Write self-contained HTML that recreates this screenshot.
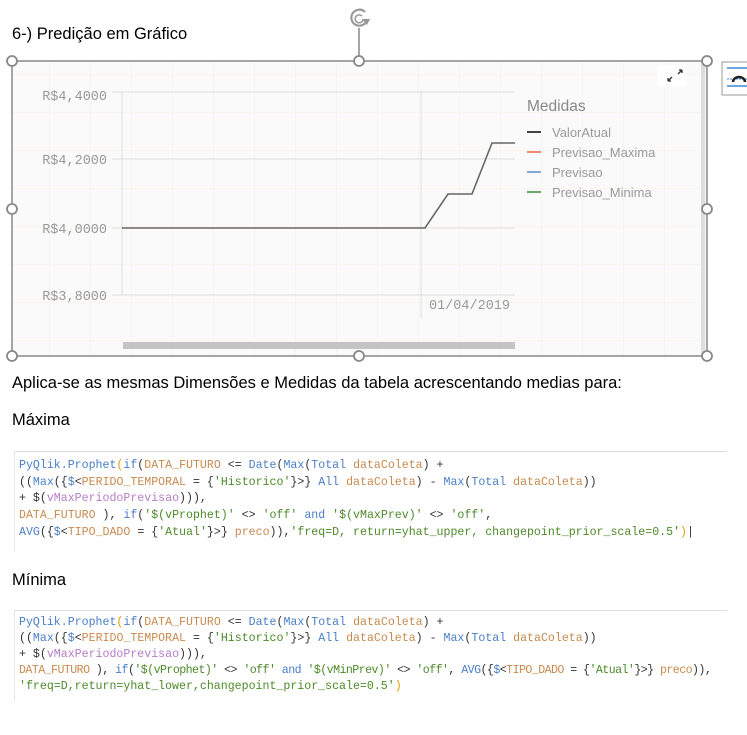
<!DOCTYPE html>
<html><head><meta charset="utf-8"><style>
body{margin:0;background:#fff;width:747px;height:735px;overflow:hidden;position:relative;font-family:"Liberation Sans",sans-serif}
.t{position:absolute;left:12px;font-size:16.5px;color:#000;white-space:nowrap}
.code{position:absolute;left:14px;right:20px;border-top:1px solid #ddd;border-left:1px solid #e6e6e6;font-family:"Liberation Mono",monospace;font-size:11.6px;white-space:pre;color:#333}
.code div{position:absolute;left:4px}
.b{color:#4a7fc8}.o{color:#c98a4f}.g{color:#4d8a2a}.p{color:#b77cc7}.y{color:#e0a000}
</style></head><body>
<div class="t" style="top:25px">6-) Predição em Gráfico</div>
<svg style="position:absolute;left:0;top:0" width="747" height="365">
<defs><pattern id="gr" width="41" height="38" patternUnits="userSpaceOnUse" x="8" y="-2"><path d="M0 0V38M0 0H41" stroke="#fbeee2" stroke-width="1" fill="none"/></pattern></defs>
<rect x="12" y="61" width="695" height="295" fill="#fafafa"/>
<rect x="12" y="61" width="695" height="295" fill="url(#gr)"/>
<rect x="701" y="61" width="4" height="295" fill="#ddd"/>
<rect x="657" y="65" width="30" height="22" fill="#fff"/>
<path d="M668 81l4-4M668 81v-3M668 81h3M682 70l-4 4M682 70v3M682 70h-3" stroke="#333" stroke-width="1.3" fill="none"/>
<g stroke="#ddd" stroke-width="1">
<line x1="112" y1="92" x2="515" y2="92"/><line x1="112" y1="159" x2="515" y2="159"/>
<line x1="112" y1="228" x2="515" y2="228"/><line x1="112" y1="295" x2="515" y2="295"/>
<line x1="122" y1="92" x2="122" y2="295"/><line x1="421" y1="92" x2="421" y2="318"/></g>
<g font-family="Liberation Mono,monospace" font-size="13.5" fill="#999" text-anchor="end">
<text x="107" y="100">R$4,4000</text><text x="107" y="164">R$4,2000</text><text x="107" y="233">R$4,0000</text><text x="107" y="300">R$3,8000</text>
<text x="510" y="309">01/04/2019</text></g>
<polyline points="122,228 425,228 448,194 472,194 492,143 515,143" fill="none" stroke="#666" stroke-width="1.6"/>
<rect x="123" y="342" width="392" height="7" fill="#c4c4c4"/>
<text x="527" y="111" font-size="15.5" fill="#888">Medidas</text>
<g font-size="13" fill="#999">
<line x1="527" y1="132" x2="541" y2="132" stroke="#444" stroke-width="2"/><text x="552" y="137">ValorAtual</text>
<line x1="527" y1="152" x2="541" y2="152" stroke="#f08a70" stroke-width="2"/><text x="552" y="157">Previsao_Maxima</text>
<line x1="527" y1="172" x2="541" y2="172" stroke="#80a8d8" stroke-width="2"/><text x="552" y="177">Previsao</text>
<line x1="527" y1="192" x2="541" y2="192" stroke="#6aa86a" stroke-width="2"/><text x="552" y="197">Previsao_Minima</text></g>
<rect x="12" y="61" width="695" height="295" fill="none" stroke="#888" stroke-width="1.5"/>
<line x1="359" y1="28" x2="359" y2="56" stroke="#888" stroke-width="1.5"/>
<g fill="#fff" stroke="#888" stroke-width="1.8">
<circle cx="12" cy="61" r="5"/><circle cx="359" cy="61" r="5"/><circle cx="707" cy="61" r="5"/>
<circle cx="12" cy="209" r="5"/><circle cx="707" cy="209" r="5"/>
<circle cx="12" cy="356" r="5"/><circle cx="359" cy="356" r="5"/><circle cx="707" cy="356" r="5"/></g>
<path d="M365 12a8 8 0 1 0 2 8" stroke="#999" stroke-width="2.2" fill="none"/>
<path d="M362 16a4 4 0 1 0 1 4" stroke="#999" stroke-width="1.5" fill="none"/>
<path d="M362 19l8 0l-3 6z" fill="#999"/>
<rect x="722" y="62" width="30" height="33" fill="#fff" stroke="#999"/>
<line x1="727" y1="68" x2="747" y2="68" stroke="#3a8ad8" stroke-width="1.5"/>
<line x1="727" y1="79" x2="747" y2="79" stroke="#3a8ad8" stroke-width="1" stroke-dasharray="2 1"/>
<line x1="727" y1="86" x2="747" y2="86" stroke="#3a8ad8" stroke-width="1.5"/>
<path d="M733 82a6 5 0 0 1 12 0" stroke="#222" stroke-width="2.5" fill="none"/>
</svg>
<div class="t" style="top:374px">Aplica-se as mesmas Dimensões e Medidas da tabela acrescentando medias para:</div>
<div class="t" style="top:411px">Máxima</div>
<div class="code" style="top:451px;height:100px">
<div style="top:7px"><span class="b">PyQlik.Prophet</span><span class="y">(</span><span class="b">if</span>(<span class="o">DATA_FUTURO</span> &lt;= <span class="b">Date</span>(<span class="b">Max</span>(<span class="b">Total</span> <span class="o">dataColeta</span>) +</div>
<div style="top:24px">((<span class="b">Max</span>({<span class="b">$</span>&lt;<span class="o">PERIDO_TEMPORAL</span> = {<span class="g">'Historico'</span>}&gt;} <span class="b">All</span> <span class="o">dataColeta</span>) - <span class="b">Max</span>(<span class="b">Total</span> <span class="o">dataColeta</span>))</div>
<div style="top:40px">+ $(<span class="p">vMaxPeriodoPrevisao</span>))),</div>
<div style="top:57px"><span class="o">DATA_FUTURO</span> ), <span class="b">if</span>(<span class="g">'$(vProphet)'</span> &lt;&gt; <span class="g">'off'</span> <span class="b">and</span> <span class="g">'$(vMaxPrev)'</span> &lt;&gt; <span class="g">'off'</span>,</div>
<div style="top:74px"><span class="b">AVG</span>({<span class="b">$</span>&lt;<span class="o">TIPO_DADO</span> = {<span class="g">'Atual'</span>}&gt;} <span class="o">preco</span>)),<span class="g">'freq=D, return=yhat_upper, changepoint_prior_scale=0.5'</span><span class="y">)</span>|</div>
</div>
<div class="t" style="top:571px">Mínima</div>
<div class="code" style="top:610px;height:90px">
<div style="top:5px"><span class="b">PyQlik.Prophet</span><span class="y">(</span><span class="b">if</span>(<span class="o">DATA_FUTURO</span> &lt;= <span class="b">Date</span>(<span class="b">Max</span>(<span class="b">Total</span> <span class="o">dataColeta</span>) +</div>
<div style="top:21px">((<span class="b">Max</span>({<span class="b">$</span>&lt;<span class="o">PERIDO_TEMPORAL</span> = {<span class="g">'Historico'</span>}&gt;} <span class="b">All</span> <span class="o">dataColeta</span>) - <span class="b">Max</span>(<span class="b">Total</span> <span class="o">dataColeta</span>))</div>
<div style="top:37px">+ $(<span class="p">vMaxPeriodoPrevisao</span>))),</div>
<div style="top:53px;letter-spacing:-0.55px"><span class="o">DATA_FUTURO</span> ), <span class="b">if</span>(<span class="g">'$(vProphet)'</span> &lt;&gt; <span class="g">'off'</span> <span class="b">and</span> <span class="g">'$(vMinPrev)'</span> &lt;&gt; <span class="g">'off'</span>, <span class="b">AVG</span>({<span class="b">$</span>&lt;<span class="o">TIPO_DADO</span> = {<span class="g">'Atual'</span>}&gt;} <span class="o">preco</span>)),</div>
<div style="top:69px"><span class="g">'freq=D,return=yhat_lower,changepoint_prior_scale=0.5'</span><span class="y">)</span></div>
</div>
</body></html>
